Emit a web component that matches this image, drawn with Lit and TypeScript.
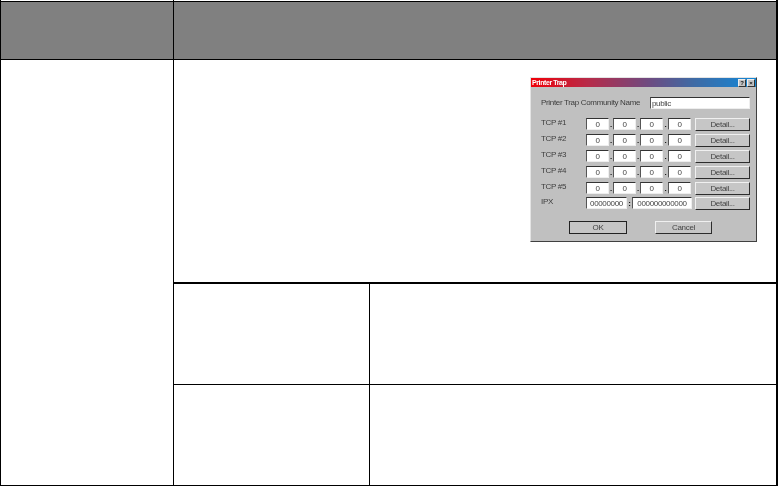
import { LitElement, html, css } from "lit";
import { customElement } from "lit/decorators.js";

@customElement("app-root")
export class AppRoot extends LitElement {
  static styles = css`
    :host { display: block; width: 778px; height: 486px; overflow: hidden; background: #fff; font-family: "Liberation Sans", Arial, sans-serif; }
    * { box-sizing: border-box; }
    .head, .body { display: grid; grid-template-columns: 174px 604px; }
    .head { height: 60px; }
    .hc { padding-top: 1px; border-right: 1px solid #000; }
    .hc.first { border-left: 1px solid #000; }
    .hc.last { border-right: 2px solid #000; }
    .fill { height: 59px; background: #808080; border-top: 1px solid #000; border-bottom: 1px solid #000; }
    .body { height: 426px; }
    .side { border-left: 1px solid #000; border-right: 1px solid #000; border-bottom: 1px solid #000; }
    .main { border-right: 2px solid #000; display: grid; grid-template-rows: 224px 101px 101px; }
    .top { border-bottom: 2px solid #000; display: flex; justify-content: flex-end; align-items: flex-start; padding: 17px 19px 0 0; }
    .sub { display: grid; grid-template-columns: 196px 1fr; border-bottom: 1px solid #000; }
    .sub > div:first-child { border-right: 1px solid #000; }

    .dialog { width: 227px; height: 165px; background: #c0c0c0; border: 1px solid; border-color: #e4e4e4 #404040 #404040 #e4e4e4; color: #3c3c3c; font-size: 8px; letter-spacing: -0.33px; line-height: 12px; filter: blur(0.35px); display: flex; flex-direction: column; }
    .title { height: 9px; background: linear-gradient(90deg, #f00008 0%, #b82a48 25%, #6f4a80 52%, #3f6aa4 72%, #1288d8 100%); display: flex; justify-content: space-between; align-items: center; color: #fff; font-weight: 700; font-size: 7px; letter-spacing: -0.4px; line-height: 9px; padding: 0 1px 0 1px; }
    .ctrls { display: flex; gap: 1px; }
    .ctrl { width: 8px; height: 8px; background: #c4c4c4; border: 1px solid; border-color: #eee #333 #333 #eee; color: #111; font-size: 6px; letter-spacing: 0; line-height: 6px; text-align: center; font-weight: 700; }
    .form { padding: 10px 0 0 10px; display: flex; flex-direction: column; }
    .name { display: flex; height: 12px; margin-bottom: 9px; }
    .name .lab { width: 109px; }
    .input { background: #fff; height: 12px; border: 1px solid; border-color: #333 #eee #eee #555; text-align: center; line-height: 11px; color: #444; }
    .name .input { width: 100px; text-align: left; padding-left: 1px; }
    .rows { display: flex; flex-direction: column; gap: 4px; }
    .row { display: flex; height: 12px; }
    .row.ipx { margin-top: -1px; }
    .row .lab { width: 45px; margin-top: -1px; }
    .octet { width: 23px; }
    .sep { width: 4px; font-size: 8px; font-weight: 700; line-height: 14px; text-align: center; color: #111; }
    .sep.w5 { width: 5px; }
    .sep.w3 { width: 3px; }
    .net { width: 41px; }
    .node { width: 60px; }
    .btn { background: #c6c6c6; border: 1px solid; border-color: #f0f0f0 #2c2c2c #2c2c2c #f0f0f0; display: flex; align-items: center; justify-content: center; color: #444; }
    .detail { width: 55px; height: 13px; }
    .actions { display: flex; margin: 12px 0 0 28px; gap: 28px; }
    .act { height: 13px; width: 58px; }
    .act.ok { border-color: #222; }
    .act.cancel { width: 57px; }
  `;

  private octets() {
    return html`
      <div class="input octet">0</div><div class="sep">.</div>
      <div class="input octet">0</div><div class="sep">.</div>
      <div class="input octet">0</div><div class="sep w5">.</div>
      <div class="input octet">0</div><div class="sep"></div>
      <div class="btn detail">Detail...</div>`;
  }

  render() {
    return html`
      <div class="head">
        <div class="hc first"><div class="fill"></div></div>
        <div class="hc last"><div class="fill"></div></div>
      </div>
      <div class="body">
        <div class="side"></div>
        <div class="main">
          <div class="top">
            <div class="dialog">
              <div class="title">
                <span>Printer Trap</span>
                <div class="ctrls"><div class="ctrl">?</div><div class="ctrl">×</div></div>
              </div>
              <div class="form">
                <div class="name"><div class="lab">Printer Trap Community Name</div><div class="input">public</div></div>
                <div class="rows">
                  ${[1, 2, 3, 4, 5].map(n => html`<div class="row"><div class="lab">TCP #${n}</div>${this.octets()}</div>`)}
                  <div class="row ipx">
                    <div class="lab">IPX</div>
                    <div class="input net">00000000</div><div class="sep w5">:</div>
                    <div class="input node">000000000000</div><div class="sep w3"></div>
                    <div class="btn detail">Detail...</div>
                  </div>
                </div>
                <div class="actions">
                  <div class="btn act ok">OK</div>
                  <div class="btn act cancel">Cancel</div>
                </div>
              </div>
            </div>
          </div>
          <div class="sub"><div></div><div></div></div>
          <div class="sub"><div></div><div></div></div>
        </div>
      </div>`;
  }
}
